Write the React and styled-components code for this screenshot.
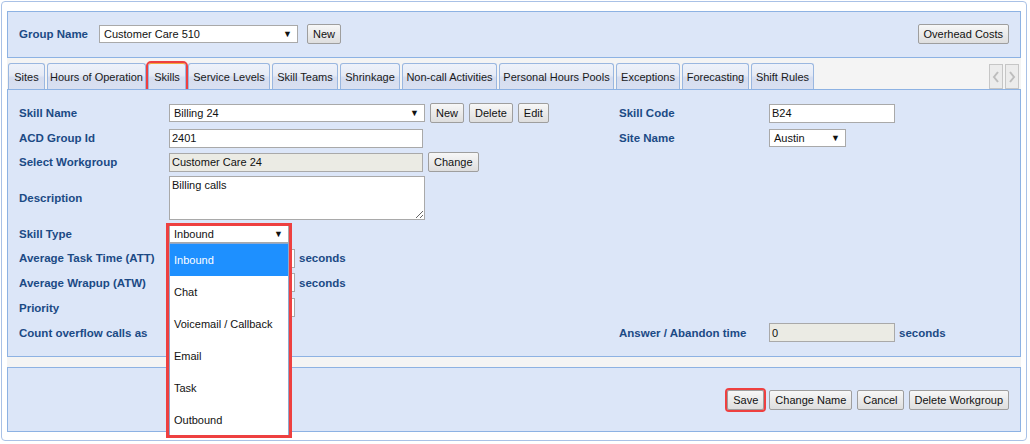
import React from 'react';
import styled, { createGlobalStyle } from 'styled-components';

const GlobalStyle = createGlobalStyle`
  body {
    margin: 0;
    background: #fff;
    font-family: "Liberation Sans", Arial, sans-serif;
  }
`;

const Frame = styled.div`
  margin: 1px 0 0 1px;
  width: 1026px;
  height: 440px;
  box-sizing: border-box;
  border: 1px solid #a9c1e6;
  border-radius: 4px;
  padding: 9px 5px 8px 5px;
  display: flex;
  flex-direction: column;
  background: #fff;
`;

const Panel = styled.div`
  box-sizing: border-box;
  border: 1px solid #8db2e3;
  background: #dce6f8;
`;

const TopBar = styled(Panel)`
  height: 47px;
  display: flex;
  align-items: center;
  padding: 0 11px 1px 11px;
`;

const Label = styled.div`
  font-weight: bold;
  font-size: 11.5px;
  color: #1b4a85;
  white-space: nowrap;
  width: ${(p) => p.$w || 'auto'};
`;

const Spacer = styled.div`
  flex: 1;
`;

const Button = styled.button`
  height: 20px;
  padding: 0 5px;
  margin-left: ${(p) => p.$ml || 0}px;
  font-family: "Liberation Sans", Arial, sans-serif;
  font-size: 11px;
  color: #111;
  background: linear-gradient(#f7f7f7, #dedede);
  border: 1px solid #9e9e9e;
  border-radius: 2px;
  white-space: nowrap;
  outline: ${(p) => (p.$marked ? '2px solid #ee4040' : 'none')};
`;

const FakeSelect = styled.div`
  box-sizing: border-box;
  width: ${(p) => p.$w}px;
  height: 18px;
  background: #fff;
  border: 1px solid #a9a9a9;
  display: flex;
  align-items: center;
  justify-content: space-between;
  padding: 0 5px 0 4px;
  font-size: 11px;
  color: #111;
  &::after {
    content: '▼';
    font-size: 9px;
    color: #111;
  }
`;

const Input = styled.input`
  box-sizing: border-box;
  width: ${(p) => p.$w}px;
  height: 19px;
  padding: 0 2px;
  border: 1px solid #a9a9a9;
  background: ${(p) => (p.disabled ? '#ebebe4' : '#fff')};
  font-family: "Liberation Sans", Arial, sans-serif;
  font-size: 11px;
  color: #111;
  outline: none;
`;

const TextArea = styled.textarea`
  box-sizing: border-box;
  width: 256px;
  height: 44px;
  padding: 2px 2px;
  border: 1px solid #a9a9a9;
  font-family: "Liberation Sans", Arial, sans-serif;
  font-size: 11px;
  color: #111;
  outline: none;
`;

const TabSection = styled.div`
  background: #f4f4f4;
  padding-bottom: 10px;
  display: flex;
  flex-direction: column;
`;

const TabStrip = styled.div`
  height: 31px;
  display: flex;
  align-items: flex-end;
  gap: 2px;
  padding: 0 2px 0 1px;
`;

const Tab = styled.div`
  box-sizing: border-box;
  width: ${(p) => p.$w}px;
  height: 26px;
  border: 1px solid #9ab7e0;
  border-bottom: none;
  border-top-color: ${(p) => (p.$active ? '#f2a840' : '#9ab7e0')};
  border-radius: 3px 3px 0 0;
  background: linear-gradient(#eef2fa 0%, #e6ebf6 45%, #d6ddef 55%, #d9e0f1 100%);
  display: flex;
  align-items: center;
  justify-content: center;
  font-size: 11px;
  color: #1a1a1a;
  white-space: nowrap;
  outline: ${(p) => (p.$marked ? '2px solid #ee4040' : 'none')};
`;

const ScrollBtns = styled.div`
  margin-left: auto;
  display: flex;
  gap: 2px;
`;

const ScrollBtn = styled.div`
  box-sizing: border-box;
  width: 14px;
  height: 25px;
  border: 1px solid #c6c6c6;
  background: #ececec;
  display: flex;
  align-items: center;
  justify-content: center;
`;

const Content = styled(Panel)`
  height: 268px;
  padding: 10px 11px 0 11px;
`;

const FormGrid = styled.div`
  display: grid;
  grid-template-columns: 150px 450px 150px 1fr;
  grid-template-rows: 26px 24px 24px 48px 24px 24px 25px 25px 25px;
  align-items: center;
`;

const Field = styled.div`
  display: flex;
  align-items: center;
  gap: 5px;
  height: 100%;
`;

const Unit = styled.span`
  font-weight: bold;
  font-size: 11.5px;
  color: #1b4a85;
  margin-left: -1px;
`;

const DropWrap = styled.div`
  position: relative;
  width: 120px;
  height: 18px;
`;

const DropList = styled.div`
  position: absolute;
  top: 18px;
  left: 0;
  width: 120px;
  box-sizing: border-box;
  border: 1px solid #8fa8cc;
  background: #fff;
  z-index: 2;
`;

const DropItem = styled.div`
  height: 32px;
  line-height: 32px;
  padding-left: 4px;
  font-size: 11px;
  color: ${(p) => (p.$selected ? '#fff' : '#111')};
  background: ${(p) => (p.$selected ? '#1e90ff' : '#fff')};
`;

const RedFrame = styled.div`
  position: absolute;
  top: -2px;
  left: -3px;
  width: 126px;
  height: 215px;
  box-sizing: border-box;
  border: 3px solid #ee4040;
  z-index: 3;
  pointer-events: none;
`;

const Footer = styled(Panel)`
  height: 65px;
  display: flex;
  align-items: center;
  justify-content: flex-end;
  gap: 5px;
  padding-right: 11px;
`;

const tabs = [
  ['Sites', 37],
  ['Hours of Operation', 99],
  ['Skills', 38],
  ['Service Levels', 82],
  ['Skill Teams', 66],
  ['Shrinkage', 60],
  ['Non-call Activities', 95],
  ['Personal Hours Pools', 115],
  ['Exceptions', 64],
  ['Forecasting', 67],
  ['Shift Rules', 63],
];

const skillTypes = ['Inbound', 'Chat', 'Voicemail / Callback', 'Email', 'Task', 'Outbound'];

const Chevron = ({ dir }) => (
  <svg width="8" height="12" viewBox="0 0 8 12">
    <path
      d={dir === 'left' ? 'M6 1 L2 6 L6 11' : 'M2 1 L6 6 L2 11'}
      fill="none"
      stroke="#bdbdbd"
      strokeWidth="2"
    />
  </svg>
);

export default function App() {
  return (
    <>
      <GlobalStyle />
      <Frame>
        <TopBar>
          <Label $w="80px">Group Name</Label>
          <FakeSelect $w={199}>Customer Care 510</FakeSelect>
          <Button $ml={9}>New</Button>
          <Spacer />
          <Button>Overhead Costs</Button>
        </TopBar>

        <TabSection>
          <TabStrip>
            {tabs.map(([name, w]) => (
              <Tab key={name} $w={w} $active={name === 'Skills'} $marked={name === 'Skills'}>
                {name}
              </Tab>
            ))}
            <ScrollBtns>
              <ScrollBtn><Chevron dir="left" /></ScrollBtn>
              <ScrollBtn><Chevron dir="right" /></ScrollBtn>
            </ScrollBtns>
          </TabStrip>

          <Content>
            <FormGrid>
              <Label>Skill Name</Label>
              <Field>
                <FakeSelect $w={256}>Billing 24</FakeSelect>
                <Button>New</Button>
                <Button>Delete</Button>
                <Button>Edit</Button>
              </Field>
              <Label>Skill Code</Label>
              <Field>
                <Input $w={126} defaultValue="B24" />
              </Field>

              <Label>ACD Group Id</Label>
              <Field>
                <Input $w={254} defaultValue="2401" />
              </Field>
              <Label>Site Name</Label>
              <Field>
                <FakeSelect $w={77}>Austin</FakeSelect>
              </Field>

              <Label>Select Workgroup</Label>
              <Field>
                <Input $w={254} disabled defaultValue="Customer Care 24" />
                <Button>Change</Button>
              </Field>
              <div />
              <div />

              <Label>Description</Label>
              <Field>
                <TextArea defaultValue="Billing calls" />
              </Field>
              <div />
              <div />

              <Label>Skill Type</Label>
              <Field>
                <DropWrap>
                  <FakeSelect $w={120}>Inbound</FakeSelect>
                  <DropList>
                    {skillTypes.map((t, i) => (
                      <DropItem key={t} $selected={i === 0}>{t}</DropItem>
                    ))}
                  </DropList>
                  <RedFrame />
                </DropWrap>
              </Field>
              <div />
              <div />

              <Label>Average Task Time (ATT)</Label>
              <Field>
                <Input $w={126} defaultValue="" />
                <Unit>seconds</Unit>
              </Field>
              <div />
              <div />

              <Label>Average Wrapup (ATW)</Label>
              <Field>
                <Input $w={126} defaultValue="" />
                <Unit>seconds</Unit>
              </Field>
              <div />
              <div />

              <Label>Priority</Label>
              <Field>
                <Input $w={126} defaultValue="" />
              </Field>
              <div />
              <div />

              <Label>Count overflow calls as</Label>
              <div />
              <Label>Answer / Abandon time</Label>
              <Field>
                <Input $w={126} disabled defaultValue="0" />
                <Unit>seconds</Unit>
              </Field>
            </FormGrid>
          </Content>
        </TabSection>

        <Footer>
          <Button $marked>Save</Button>
          <Button>Change Name</Button>
          <Button>Cancel</Button>
          <Button>Delete Workgroup</Button>
        </Footer>
      </Frame>
    </>
  );
}
